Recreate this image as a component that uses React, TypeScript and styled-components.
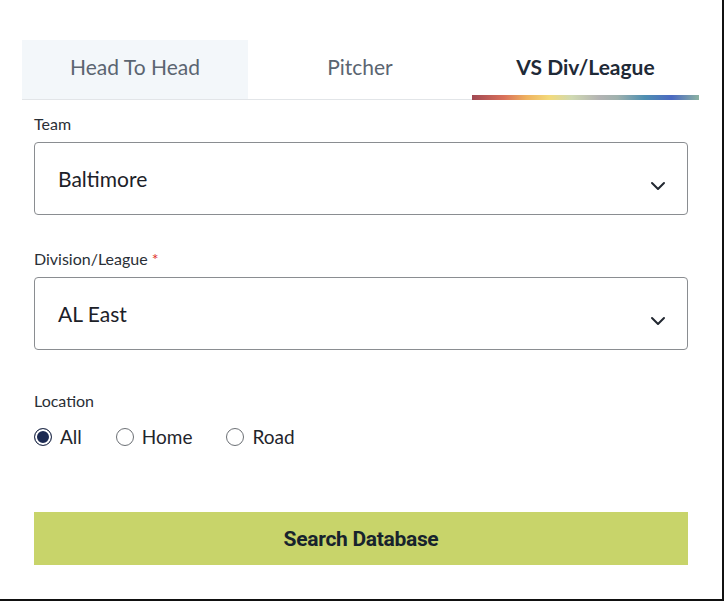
import { FC, useState } from "react";
import styled, { createGlobalStyle } from "styled-components";

const tabs = ["Head To Head", "Pitcher", "VS Div/League"];
const locations = ["All", "Home", "Road"];

const GlobalStyle = createGlobalStyle`
  body {
    margin: 0;
    background: #fff;
    font-family: Lato, "Open Sans", sans-serif;
  }
`;

const Chevron: FC = () => (
  <ChevronIcon width="16" height="10" viewBox="0 0 16 10" fill="none">
    <path d="M2 2l6 6 6-6" stroke="#222831" strokeWidth="2" strokeLinecap="round" strokeLinejoin="round" />
  </ChevronIcon>
);

const App: FC = () => {
  const [activeTab, setActiveTab] = useState(2);
  const [location, setLocation] = useState("All");

  return (
    <Frame>
      <GlobalStyle />
      <Panel>
        <TabBar>
          {tabs.map((tab, i) => (
            <Tab key={tab} $active={i === activeTab} $shaded={i === 0} onClick={() => setActiveTab(i)}>
              {tab}
            </Tab>
          ))}
        </TabBar>

        <Form>
          <Field>
            <Label>Team</Label>
            <Select>
              <SelectValue>Baltimore</SelectValue>
              <Chevron />
            </Select>
          </Field>

          <Field>
            <Label>
              Division/League <Required>*</Required>
            </Label>
            <Select>
              <SelectValue>AL East</SelectValue>
              <Chevron />
            </Select>
          </Field>

          <Field>
            <Label>Location</Label>
            <RadioRow>
              {locations.map((loc) => (
                <RadioOption key={loc} onClick={() => setLocation(loc)}>
                  <RadioDot $checked={location === loc} />
                  {loc}
                </RadioOption>
              ))}
            </RadioRow>
          </Field>

          <SearchButton>Search Database</SearchButton>
        </Form>
      </Panel>
    </Frame>
  );
};

export default App;

const Frame = styled.div`
  width: 724px;
  height: 601px;
  box-sizing: border-box;
  border-right: 2px solid #111;
  border-bottom: 2px solid #111;
  overflow: hidden;
`;

const Panel = styled.div`
  width: 677px;
  padding: 40px 0 0 22px;
`;

const TabBar = styled.div`
  display: grid;
  grid-template-columns: 226px 224px 227px;
  border-bottom: 1px solid #e2e5e8;
`;

const Tab = styled.div<{ $active: boolean; $shaded: boolean }>`
  position: relative;
  height: 59px;
  box-sizing: border-box;
  padding-bottom: 6px;
  display: flex;
  align-items: center;
  justify-content: center;
  font-size: 21px;
  font-weight: ${(p) => (p.$active ? 700 : 400)};
  color: ${(p) => (p.$active ? "#1f2a37" : "#5b6571")};
  background: ${(p) => (p.$shaded ? "#f3f7fa" : "transparent")};
  cursor: pointer;

  &::after {
    content: "";
    display: ${(p) => (p.$active ? "block" : "none")};
    position: absolute;
    left: 0;
    right: 0;
    bottom: -1px;
    height: 5px;
    background: linear-gradient(
      90deg,
      #a04853 0%,
      #d9705a 14%,
      #efb25f 24%,
      #f3da7a 34%,
      #cfd9b2 44%,
      #b3b3b3 56%,
      #9fb1ad 64%,
      #4f8fb1 76%,
      #4b69c2 88%,
      #8cb3a1 100%
    );
  }
`;

const Form = styled.div`
  padding: 14px 11px 0 12px;
  display: flex;
  flex-direction: column;
`;

const Field = styled.div`
  display: flex;
  flex-direction: column;
  gap: 9px;
  margin-bottom: 34px;

  &:nth-child(3) {
    margin-top: 7px;
    gap: 16px;
    margin-bottom: 64px;
  }
`;

const Label = styled.label`
  font-size: 16px;
  line-height: 19px;
  color: #2a2f36;
`;

const Required = styled.span`
  color: #e0302a;
`;

const Select = styled.div`
  height: 73px;
  box-sizing: border-box;
  border: 1px solid #8a8d91;
  border-radius: 4px;
  display: flex;
  align-items: center;
  justify-content: space-between;
  padding: 0 21px 0 23px;
  cursor: pointer;
`;

const SelectValue = styled.span`
  font-size: 21px;
  color: #1c2128;
`;

const ChevronIcon = styled.svg`
  margin-top: 14px;
`;

const RadioRow = styled.div`
  display: flex;
  gap: 34px;
`;

const RadioOption = styled.div`
  display: flex;
  align-items: center;
  gap: 8px;
  font-size: 19px;
  line-height: 22px;
  color: #1f252c;
  cursor: pointer;
`;

const RadioDot = styled.span<{ $checked: boolean }>`
  width: 18px;
  height: 18px;
  box-sizing: border-box;
  border-radius: 50%;
  border: 1px solid ${(p) => (p.$checked ? "#2b3550" : "#6c7075")};
  background: ${(p) => (p.$checked ? "#1c2a52" : "#fff")};
  box-shadow: ${(p) => (p.$checked ? "inset 0 0 0 2px #fff" : "none")};
`;

const SearchButton = styled.button`
  height: 53px;
  border: none;
  background: #c8d46a;
  font-family: Roboto, "Liberation Sans", sans-serif;
  font-size: 21px;
  font-weight: 700;
  letter-spacing: -0.3px;
  color: #17232d;
  cursor: pointer;
`;
